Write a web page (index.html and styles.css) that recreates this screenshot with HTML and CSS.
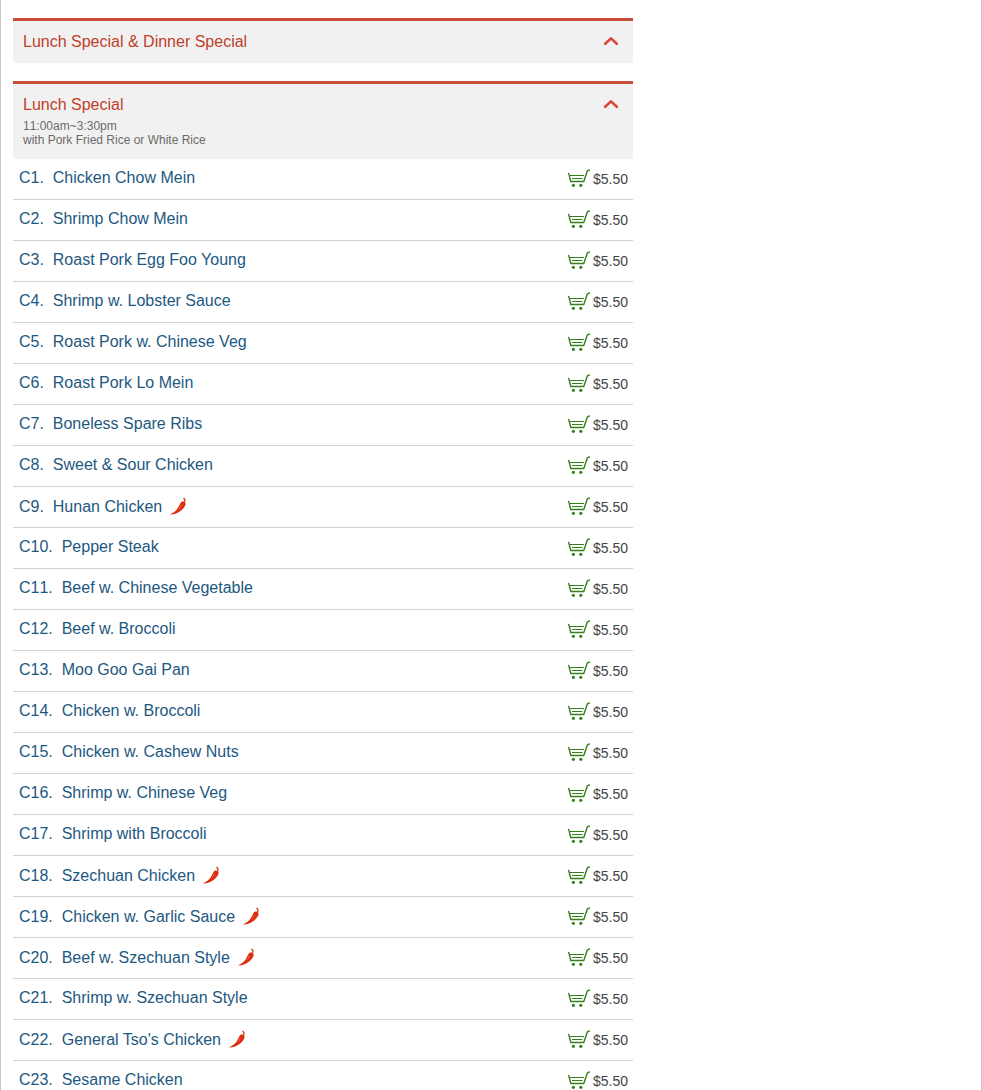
FILE: index.html
```html
<!DOCTYPE html>
<html lang="en">
<head>
  <meta charset="UTF-8" />
  <meta name="viewport" content="width=device-width, initial-scale=1.0"/>
  <title>Lunch Special Menu</title>
  <link rel="stylesheet" href="styles.css">
</head>
<body>

<!-- Shared icons -->
<svg class="icons">
  <symbol id="icon-up" viewBox="0 0 16 10">
    <path d="M2.2 7.8 L8 2.4 L13.8 7.8" fill="none" stroke="currentColor" stroke-width="2.6" stroke-linecap="round" stroke-linejoin="round"/>
  </symbol>
  <symbol id="icon-cart" viewBox="0 0 24 20">
    <path d="M1.7 5.4 L3.8 13.5 H16.8 L20.4 2.8 L22.4 2" fill="none" stroke="currentColor" stroke-width="1.4" stroke-linecap="round" stroke-linejoin="round"/>
    <path d="M3 7.5 H17 M5 10.5 H15.5" fill="none" stroke="currentColor" stroke-width="1"/>
    <circle cx="6.4" cy="17.3" r="1.6" fill="currentColor"/>
    <circle cx="13.8" cy="17.3" r="1.6" fill="currentColor"/>
  </symbol>
  <symbol id="icon-chili" viewBox="0 0 18 18">
    <path d="M13.2 4.6 C14.8 4.2 16.6 4.8 16.6 7 C16.4 9.4 13.6 12.6 10.8 14.6 C7.6 16.8 4.2 17.6 1 17.4 C4 16 6.6 14.2 8.4 11.8 C10.2 9.6 10.8 5.6 13.2 4.6 Z" fill="#dc2d10"/>
    <path d="M15.4 5.2 C16.4 3.6 16 2.2 14.8 1.4" fill="none" stroke="#cf4a20" stroke-width="1.3" stroke-linecap="round"/>
    <path d="M12.2 7.6 C11.8 9.4 11 11 9.8 12.4" fill="none" stroke="#f0704e" stroke-width="0.8"/>
  </symbol>
</svg>

<main class="page">
  <div class="menu">

    <section class="category">
      <header class="category-head">
        <h2>Lunch Special &amp; Dinner Special</h2>
        <button class="toggle" type="button" aria-label="Collapse Lunch Special and Dinner Special"><svg><use href="#icon-up"/></svg></button>
      </header>
    </section>

    <section class="category">
      <header class="category-head">
        <h2>Lunch Special</h2>
        <button class="toggle" type="button" aria-label="Collapse Lunch Special"><svg><use href="#icon-up"/></svg></button>
        <p>11:00am~3:30pm<br>with Pork Fried Rice or White Rice</p>
      </header>
      <ul class="items" id="lunchItems"></ul>
    </section>

  </div>
</main>

<script>
  const lunch = [
    { name: 'Chicken Chow Mein' },
    { name: 'Shrimp Chow Mein' },
    { name: 'Roast Pork Egg Foo Young' },
    { name: 'Shrimp w. Lobster Sauce' },
    { name: 'Roast Pork w. Chinese Veg' },
    { name: 'Roast Pork Lo Mein' },
    { name: 'Boneless Spare Ribs' },
    { name: 'Sweet &amp; Sour Chicken' },
    { name: 'Hunan Chicken', spicy: true },
    { name: 'Pepper Steak' },
    { name: 'Beef w. Chinese Vegetable' },
    { name: 'Beef w. Broccoli' },
    { name: 'Moo Goo Gai Pan' },
    { name: 'Chicken w. Broccoli' },
    { name: 'Chicken w. Cashew Nuts' },
    { name: 'Shrimp w. Chinese Veg' },
    { name: 'Shrimp with Broccoli' },
    { name: 'Szechuan Chicken', spicy: true },
    { name: 'Chicken w. Garlic Sauce', spicy: true },
    { name: 'Beef w. Szechuan Style', spicy: true },
    { name: 'Shrimp w. Szechuan Style' },
    { name: "General Tso's Chicken", spicy: true },
    { name: 'Sesame Chicken' }
  ];
  const price = 5.5;

  const list = document.getElementById('lunchItems');
  lunch.forEach((item, i) => {
    const li = document.createElement('li');
    li.className = item.spicy ? 'item spicy' : 'item';
    li.innerHTML = `<a class="name" href="#c${i + 1}"><span class="num">C${i + 1}.</span>&nbsp; ${item.name}</a>
      ${item.spicy ? '<svg class="chili"><use href="#icon-chili"/></svg>' : ''}
      <button class="cart" type="button" aria-label="Add ${item.name} to cart"><svg><use href="#icon-cart"/></svg></button>
      <span class="price">$${price.toFixed(2)}</span>`;
    list.appendChild(li);
  });
</script>

</body>
</html>
```

FILE: styles.css
```css
* { box-sizing: border-box; }
body { font-family: "Liberation Sans", Arial, sans-serif; margin: 0; background: #fff; color: #444; height: 100vh; overflow: hidden; }
.icons { display: none; }
.page { min-height: 100vh; padding: 18px 12px 0; border: solid #c8c8c8; border-width: 0 1px; }
.menu { max-width: 620px; }

.category { margin-bottom: 18px; }
.category-head { display: grid; grid-template-columns: 1fr auto; align-items: center; padding: 10px 14px 10px 10px; background: #f1f1f1; border-top: 3px solid #c94f3a; }
.category-head h2 { margin: 0; font-size: 16px; font-weight: normal; line-height: 22px; color: #bf3f2b; }
.category-head p { margin: 3px 0 2px; font-size: 12px; line-height: 14px; font-kerning: none; color: #6b6b6b; }

button { padding: 0; border: 0; background: none; cursor: pointer; }
button svg { display: block; }
.toggle { padding-bottom: 2px; color: #dc4438; }
.toggle svg { width: 16px; height: 10px; }

.items { list-style: none; margin: 0; padding: 0; }
.item { display: flex; align-items: center; height: 41px; padding: 0 5px 0 6px; border-bottom: 1px solid #d2d2d2; }
.name { font-size: 16px; line-height: 20px; padding-bottom: 2px; color: #1d5881; text-decoration: none; }
.num { font-kerning: none; }
.spicy .name { padding-bottom: 0; }
.chili { width: 18px; height: 18px; margin: 0 0 2px 7px; }
.cart { margin-left: auto; padding-bottom: 2px; color: #35801c; }
.cart svg { width: 24px; height: 20px; }
.price { margin-left: 2px; font-size: 14px; line-height: 20px; color: #444; }
```
